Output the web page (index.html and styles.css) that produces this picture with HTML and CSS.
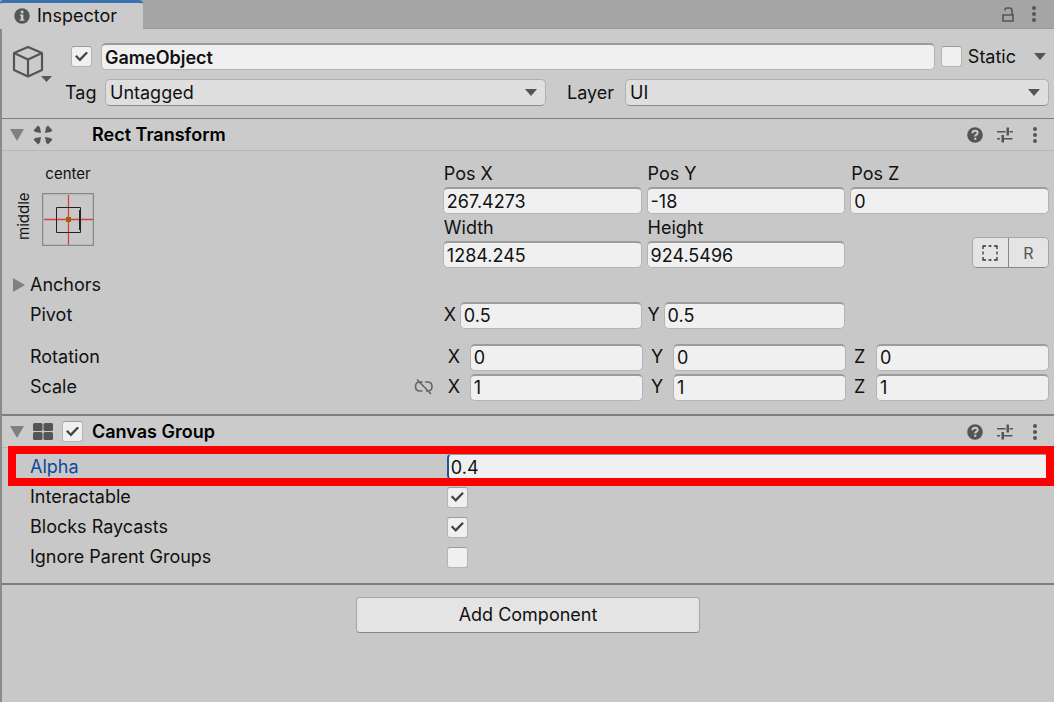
FILE: index.html
```html
<!DOCTYPE html>
<html lang="en">
  <head>
    <meta charset="utf-8">
    <title>Inspector</title>
    <link rel="stylesheet" href="styles.css">
  </head>
  <body>
    <!-- shared icons -->
    <svg class="defs" width="0" height="0">
      <symbol id="dots" viewBox="0 0 6 16">
        <circle cx="3" cy="2" r="2"/><circle cx="3" cy="8" r="2"/><circle cx="3" cy="14" r="2"/>
      </symbol>
      <symbol id="help" viewBox="0 0 16 16">
        <circle cx="8" cy="8" r="7.8"/>
        <path d="M5.4 6.3C5.4 4.6 6.500 3.700 8 3.700s2.700.9 2.700 2.300c0 1.700-2.500 1.700-2.500 3.500" fill="none" stroke="#cbcbcb" stroke-width="2"/>
        <rect x="7.200" y="10.700" width="2.100" height="2.100" fill="#cbcbcb"/>
      </symbol>
      <symbol id="preset" viewBox="0 0 16 16">
        <path d="M0 4h8.500v1.500H0zM12.500 4H16v1.500h-3.500zM9.500 0.500h2.500v8H9.500zM0 11h3v1.500H0zM7 11h8.500v1.500H7zM4.500 8h2.500v7.500H4.500z"/>
      </symbol>
    </svg>

    <main class="inspector">
      <header class="tabbar">
        <div class="tab">
          <svg width="16" height="16" viewBox="0 0 16 16"><circle cx="8" cy="8" r="7.700"/><path d="M6.800 2.800h2.600v2.400H6.800zM5.800 6.400h3.600v5h1v1.400H5.800v-1.400h1V7.800h-1z" fill="#cbcbcb"/></svg>
          <span>Inspector</span>
        </div>
        <div class="tab-tools">
          <button class="icon" aria-label="Lock"><svg width="12" height="15" viewBox="0 0 12 15"><path d="M1 8h10v6H1zM10 8V3.500Q10 1 7.500 1H5Q3 1 3 3.500" fill="none" stroke="#555" stroke-width="1.600"/></svg></button>
          <button class="icon" aria-label="Menu"><svg width="6" height="16"><use href="#dots"/></svg></button>
        </div>
      </header>

      <section class="object">
        <button class="icon cube" aria-label="Object icon">
          <svg width="40" height="38" viewBox="0 0 40 38">
            <path d="M16 2L30 8V25L16 31.500L2 25V8zM2 8L16 14.500L30 8M16 14.500V31" fill="none" stroke="#555" stroke-width="2.200" stroke-linejoin="round"/>
            <path d="M29 31h11l-5.500 6z"/>
          </svg>
        </button>
        <div class="object-rows">
          <div class="row name-row">
            <input type="checkbox" class="check" aria-label="Active" checked>
            <input type="text" class="field name" aria-label="Name" value="GameObject">
            <input type="checkbox" class="check" id="static">
            <label for="static">Static</label>
            <button class="icon static-menu" aria-label="Static options"><svg width="12" height="7"><path d="M0 0h12L6 7z"/></svg></button>
          </div>
          <div class="row">
            <label class="tag" for="tag">Tag</label>
            <div class="select wide"><select id="tag"><option>Untagged</option></select></div>
            <label class="layer" for="layer">Layer</label>
            <div class="select"><select id="layer"><option>UI</option></select></div>
          </div>
        </div>
      </section>

      <section class="component">
        <header class="component-head">
          <button class="icon fold" aria-label="Collapse"><svg width="14" height="12"><path d="M0 0h14L7 12z"/></svg></button>
          <svg class="kind" width="20" height="20" viewBox="0 0 20 20">
            <path d="M0.500 5.500L5 0.500L7 2.500L8 8L2.500 7zM19.500 5.500L15 0.500L13 2.500L12 8L17.500 7zM0.500 14.500L5 19.500L7 17.500L8 12L2.500 13zM19.500 14.500L15 19.500L13 17.500L12 12L17.500 13z"/>
          </svg>
          <h2>Rect Transform</h2>
          <div class="tools">
            <button class="icon" aria-label="Help"><svg width="16" height="16"><use href="#help"/></svg></button>
            <button class="icon" aria-label="Presets"><svg width="16" height="16"><use href="#preset"/></svg></button>
            <button class="icon" aria-label="Menu"><svg width="6" height="16"><use href="#dots"/></svg></button>
          </div>
        </header>

        <div class="rect-body">
          <div class="split">
            <div class="anchor">
              <span class="anchor-top">center</span>
              <span class="anchor-side">middle</span>
              <button class="icon" aria-label="Anchor presets">
                <svg width="52" height="53" viewBox="0 0 52 53">
                  <path d="M26.500 2V52M2 26.500H51" stroke="#d84040" stroke-width="1.300"/>
                  <rect x="0.500" y="0.500" width="51" height="52" fill="none" stroke="#888" stroke-width="1.500"/>
                  <path d="M14.500 14.500H38.500V39.500H14.500z" fill="none" stroke="#222"/>
                  <path d="M37.500 17V37" stroke="#222"/>
                  <rect x="24" y="24" width="5" height="5" fill="#9c6500"/>
                </svg>
              </button>
            </div>
            <div class="cols">
              <label class="cell">Pos X<input type="text" class="field" value="267.4273"></label>
              <label class="cell">Pos Y<input type="text" class="field" value="-18"></label>
              <label class="cell">Pos Z<input type="text" class="field" value="0"></label>
              <label class="cell">Width<input type="text" class="field" value="1284.245"></label>
              <label class="cell">Height<input type="text" class="field" value="924.5496"></label>
              <div class="modes">
                <button aria-label="Blueprint mode"><svg width="16" height="16" viewBox="0 0 16 16"><path d="M1 4V1H4M6.500 1H9.500M12 1H15V4M15 6.500V9.500M15 12V15H12M9.500 15H6.500M4 15H1V12M1 9.500V6.500" fill="none" stroke="#333" stroke-width="1.300"/></svg></button>
                <button>R</button>
              </div>
            </div>
          </div>

          <div class="split line">
            <span class="prop"><button class="icon fold side" aria-label="Expand anchors"><svg width="12" height="14"><path d="M0 0v14l12-7z"/></svg></button>Anchors</span>
          </div>
          <div class="split line">
            <span class="prop">Pivot</span>
            <div class="cols">
              <label class="axis">X<input type="text" class="field" value="0.5"></label>
              <label class="axis">Y<input type="text" class="field" value="0.5"></label>
            </div>
          </div>
          <div class="split line gap-top">
            <span class="prop">Rotation</span>
            <div class="cols vec">
              <label class="axis">X<input type="text" class="field" value="0"></label>
              <label class="axis">Y<input type="text" class="field" value="0"></label>
              <label class="axis">Z<input type="text" class="field" value="0"></label>
            </div>
          </div>
          <div class="split line">
            <span class="prop">Scale
              <button class="icon link" aria-label="Constrain proportions"><svg width="20" height="16" viewBox="0 0 20 16"><path d="M8.500 3H6Q1.500 3 1.500 7.500Q1.500 12 6 12H8.500M11 3H13.500Q18 3 18 7.500Q18 12 13.500 12H12M3 0.500L17 15" fill="none" stroke="#666" stroke-width="1.600"/></svg></button>
            </span>
            <div class="cols vec">
              <label class="axis">X<input type="text" class="field" value="1"></label>
              <label class="axis">Y<input type="text" class="field" value="1"></label>
              <label class="axis">Z<input type="text" class="field" value="1"></label>
            </div>
          </div>
        </div>
      </section>

      <section class="component">
        <header class="component-head">
          <button class="icon fold" aria-label="Collapse"><svg width="14" height="12"><path d="M0 0h14L7 12z"/></svg></button>
          <svg class="kind" width="20" height="17" viewBox="0 0 20 17"><rect width="9.500" height="8" rx="1.500"/><rect x="10.500" width="9.500" height="8" rx="1.500"/><rect y="9" width="9.500" height="8" rx="1.500"/><rect x="10.500" y="9" width="9.500" height="8" rx="1.500"/></svg>
          <input type="checkbox" class="check" aria-label="Enabled" checked>
          <h2>Canvas Group</h2>
          <div class="tools">
            <button class="icon" aria-label="Help"><svg width="16" height="16"><use href="#help"/></svg></button>
            <button class="icon" aria-label="Presets"><svg width="16" height="16"><use href="#preset"/></svg></button>
            <button class="icon" aria-label="Menu"><svg width="6" height="16"><use href="#dots"/></svg></button>
          </div>
        </header>

        <div class="group-body">
          <div class="marker"></div>
          <div class="split line">
            <label class="prop active" for="alpha">Alpha</label>
            <div class="value"><input type="text" class="field focused" id="alpha" value="0.4"></div>
          </div>
          <div class="split line">
            <label class="prop" for="interactable">Interactable</label>
            <div class="value"><input type="checkbox" class="check" id="interactable" checked></div>
          </div>
          <div class="split line">
            <label class="prop" for="raycasts">Blocks Raycasts</label>
            <div class="value"><input type="checkbox" class="check" id="raycasts" checked></div>
          </div>
          <div class="split line">
            <label class="prop" for="ignore">Ignore Parent Groups</label>
            <div class="value"><input type="checkbox" class="check" id="ignore"></div>
          </div>
        </div>
      </section>

      <footer class="footer">
        <button class="add">Add Component</button>
      </footer>
    </main>
  </body>
</html>
```
FILE: styles.css
```css
* { box-sizing: border-box; }

body { margin: 0; background: #c8c8c8; color: #111; font: 18px/26px Inter, "Liberation Sans", sans-serif; }
input, select, button { font: inherit; color: inherit; margin: 0; }
svg { display: block; fill: #555; }
.defs { position: absolute; }
.icon { display: block; padding: 0; border: none; background: none; flex: none; }

.inspector { min-height: 100vh; border-left: 2px solid #8a8a8a; }

/* tab bar */
.tabbar { display: flex; justify-content: space-between; height: 29px; margin-left: -2px; background: #a5a5a5; border-bottom: 1px solid #999; }
.tab { display: flex; align-items: center; gap: 7px; height: 29px; padding: 0 26px 0 14px; background: #cbcbcb; border-top: 3px solid #3a72b0; border-radius: 4px 4px 0 0; }
.tab-tools { display: flex; align-items: center; gap: 17px; padding-right: 17px; }

/* game object header */
.object { display: flex; gap: 13px; padding: 14px 5px 12px 10px; background: #cbcbcb; border-bottom: 1px solid #7f7f7f; }
.cube { align-self: flex-start; margin-top: 2px; }
.object-rows { flex: 1; display: flex; flex-direction: column; gap: 9px; }
.row { display: flex; align-items: center; }
.name-row { gap: 6px; padding-left: 6px; }
.name-row .name { flex: 1; margin-left: 3px; font-weight: 600; }
.static-menu { margin: 0 3px 0 12px; }
.tag { width: 40px; }
.layer { width: 58px; margin-left: 21px; }

.field { width: 100%; min-width: 0; height: 27px; padding: 0 3px; background: #f0f0f0; border: 1px solid #b4b4b4; border-top: 2px solid #9c9c9c; border-radius: 5px; outline: none; }
.focused { border-left: 2px solid #1a5596; padding-left: 2px; }

.select { position: relative; flex: 25; }
.wide { flex: 26; }
.select select { display: block; width: 100%; height: 27px; padding: 0 4px; appearance: none; background: #dfdfdf; border: 1px solid #b0b0b0; border-bottom-color: #8c8c8c; border-radius: 5px; }
.select::after { content: ""; position: absolute; right: 9px; top: 10px; border: 6px solid transparent; border-top: 7px solid #555; border-bottom: none; pointer-events: none; }

.check { display: grid; place-items: center; flex: none; width: 21px; height: 21px; appearance: none; background: #f0f0f0; border: 1px solid #b4b4b4; border-top-color: #9c9c9c; border-radius: 3px; }
.check:checked::after { content: ""; width: 13px; height: 10px; background: #444; clip-path: polygon(0 50%, 14% 36%, 36% 68%, 88% 0, 100% 14%, 38% 100%); }

/* components */
.component { border-bottom: 2px solid #7f7f7f; }
.component-head { display: flex; align-items: center; height: 32px; padding: 0 16px 0 8px; background: #cbcbcb; border-bottom: 1px solid #b8b8b8; }
.component-head h2 { margin: 0; font-size: 18px; font-weight: 600; color: #000; }
.component-head .kind { margin: 0 9px; flex: none; }
.component-head .kind + h2 { margin-left: 30px; }
.component-head .check + h2 { margin-left: 9px; }
.tools { display: flex; align-items: center; gap: 14px; margin-left: auto; }
.tools .icon:last-child { margin-left: 5px; }
.fold svg { fill: #808080; }

.split { display: grid; grid-template-columns: 8fr 11fr; padding-right: 5px; }
.line { height: 30px; align-items: center; }
.gap-top { margin-top: 12px; }
.prop { display: flex; align-items: center; padding-left: 28px; }
.active { color: #0f489c; }
.side { margin: 0 5px 0 -17px; }
.link { margin: 0 9px 0 auto; }
.cols { display: grid; grid-template-columns: repeat(3, 1fr); column-gap: 5px; }
.vec { padding-left: 5px; column-gap: 8px; }
.axis { display: grid; grid-template-columns: 16px 1fr; align-items: center; padding-left: 1px; }
.vec .axis { grid-template-columns: 22px 1fr; padding-left: 0; }

.rect-body { padding: 9px 0 12px; }
.rect-body > .split:first-child { margin-bottom: 2px; }
.cell { line-height: 27px; text-indent: 1px; }
.cell .field { display: block; text-indent: 0; }

.anchor { display: grid; grid-template-columns: 24px 52px; column-gap: 6px; align-content: start; padding: 1px 0 0 10px; }
.anchor-top { grid-column: 2; font-size: 15px; text-align: center; }
.anchor .icon { margin-top: 6px; }
.anchor-side { writing-mode: vertical-rl; transform: rotate(180deg); font-size: 15px; line-height: 24px; text-align: center; }

.modes { display: flex; align-self: end; justify-self: end; height: 31px; border: 1px solid #a6a6a6; border-bottom-color: #888; border-radius: 5px; overflow: hidden; }
.modes button { display: grid; place-items: center; width: 35px; padding: 0; border: none; background: #e4e4e4; font-size: 16px; color: #555; }
.modes button + button { width: 40px; border-left: 1px solid #888; }

.group-body { position: relative; padding: 4px 0 11px; }
.value { padding-left: 4px; }
/* highlight frame around the alpha row */
.marker { position: absolute; top: -2px; left: 6px; right: 0; height: 40px; border: 8px solid #f00; pointer-events: none; z-index: 1; }

.footer { display: flex; justify-content: center; padding: 12px 0; }
.add { width: 344px; height: 36px; background: #e4e4e4; border: 1px solid #a6a6a6; border-bottom-color: #888; border-radius: 4px; }
```
